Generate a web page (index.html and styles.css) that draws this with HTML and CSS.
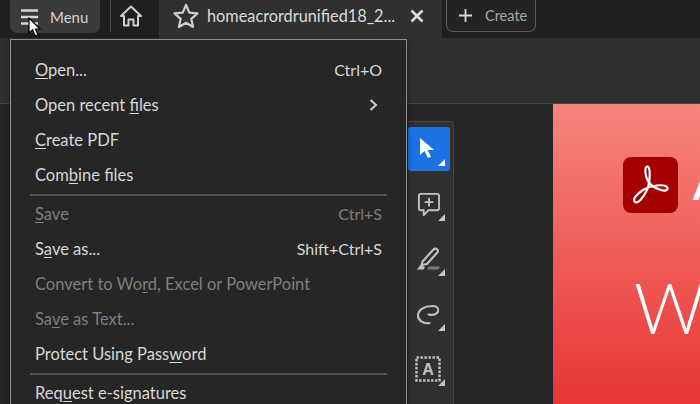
FILE: index.html
```html
<!DOCTYPE html>
<html lang="en">
<head>
<meta charset="UTF-8">
<meta name="viewport" content="width=device-width, initial-scale=1.0">
<title>Acrobat menu</title>
<link rel="stylesheet" href="styles.css">
</head>
<body>
<div class="app">
    <header class="topbar">
        <button class="menu-button">
            <svg class="burger" width="18" height="18" viewBox="0 0 18 18"><path d="M0 2.5h17M0 9h17M0 15.5h17" stroke="#d6d6d6" stroke-width="2.4" fill="none"/></svg>
            <span>Menu</span>
        </button>
        <div class="bar-divider"></div>
        <svg class="home-icon" width="24" height="24" viewBox="0 0 24 24" fill="none" stroke="#cfcfcf" stroke-width="2" stroke-linejoin="round"><path d="M2 12 12 2.5 22 12h-3v9.500h-4.500v-6h-5v6H5V12z"/></svg>
        <div class="tab">
            <svg width="26" height="26" viewBox="0 0 26 26" fill="none" stroke="#cfcfcf" stroke-width="2.2" stroke-linejoin="round"><path d="m13 2 3.300 7.600 8.200.8-6.200 5.500 1.800 8.100-7.100-4.200-7.100 4.200 1.800-8.100-6.200-5.500 8.200-.8z"/></svg>
            <span class="tab-title">homeacrordrunified18_2...</span>
            <svg class="tab-close" width="14" height="14" viewBox="0 0 14 14"><path d="M1.500 1.500l11 11M12.500 1.500l-11 11" stroke="#dcdcdc" stroke-width="2.600" fill="none"/></svg>
        </div>
        <button class="create-button">
            <svg width="13" height="13" viewBox="0 0 13 13"><path d="M6.500 0v13M0 6.500h13" stroke="#d8d8d8" stroke-width="1.800" fill="none"/></svg>
            <span>Create</span>
        </button>
    </header>
    <div class="toolbar"></div>
    <main class="workspace">
        <nav class="tool-rail">
            <div class="tool active">
                <svg width="20" height="24" viewBox="0 0 20 24"><path d="M2 1v17l4.500-4 3.500 7 3-1.500-3.500-6.500H16z" fill="#fff"/></svg>
            </div>
            <div class="tool">
                <svg width="23" height="24" viewBox="0 0 24 25" fill="none" stroke="#c4c4c4" stroke-width="1.900" stroke-linejoin="round"><path d="M4 2h17a2 2 0 0 1 2 2v13a2 2 0 0 1-2 2H12l-5 5v-5H4a2 2 0 0 1-2-2V4a2 2 0 0 1 2-2z"/><path d="M12.500 6v9M8 10.500h9"/></svg>
            </div>
            <div class="tool">
                <svg width="25" height="24" viewBox="0 0 25 24" fill="none"><path d="M6.500 14.500 17.500 2.500a2.400 2.400 0 0 1 3.800 3L11 17l-5.500 1z" stroke="#c4c4c4" stroke-width="2.100" stroke-linejoin="round"/><path d="M1 22.500 4.500 18l4.500 2-1.500 2.500z" fill="#c4c4c4"/><path d="M11 22.500l2-3h11l-1.500 3z" fill="#7a7a7a"/></svg>
            </div>
            <div class="tool">
                <svg width="25" height="21" viewBox="0 0 26 22" fill="none"><path d="M14 20C7 21 2 17 2 12 2 6 9 2 17 2c5 0 7 3 6 6-1 3-6 4-10 3" stroke="#c4c4c4" stroke-width="2.100" stroke-linecap="round"/></svg>
            </div>
            <div class="tool">
                <svg width="26" height="26" viewBox="0 0 26 26" fill="none"><rect x="1.500" y="1.500" width="23" height="23" stroke="#c4c4c4" stroke-width="2.400" stroke-dasharray="2.400 1.600"/><text x="13" y="19" text-anchor="middle" class="rail-letter">A</text></svg>
            </div>
        </nav>
        <section class="page">
            <div class="brand">
                <div class="logo">
                    <svg width="55" height="56" viewBox="0 0 55 56" fill="none"><path d="M24.500 9.500C21.500 9.500 22 17 24 22c2 5 7 9 14 11 5 2 8-1 6-3-3-3-16-2-24 3-6 4-11 9-8 12 3 2 8-4 12-12 3-7 4-23.500.5-23.500z" stroke="#fff" stroke-width="2.200" stroke-linejoin="round"/></svg>
                </div>
                <span class="brand-name">A</span>
            </div>
            <div class="welcome">We</div>
        </section>
    </main>

    <!-- cursor and dropdown lie over the window -->
    <svg class="cursor" width="14" height="21" viewBox="0 0 14 21"><path d="M1 1v15l3.600-3.200 2.600 6.200 2.800-1.200-2.600-5.800H12z" fill="#fff" stroke="#000" stroke-width="1.200"/></svg>
    <div class="dropdown">
        <div class="item"><span><u>O</u>pen...</span><span class="shortcut">Ctrl+O</span></div>
        <div class="item"><span>Open recent <u>f</u>iles</span>
            <svg class="chevron" width="9" height="12" viewBox="0 0 9 12"><path d="M1.500 1 7 6l-5.500 5" stroke="#c8c8c8" stroke-width="2.200" fill="none"/></svg>
        </div>
        <div class="item"><span><u>C</u>reate PDF</span></div>
        <div class="item"><span>Com<u>b</u>ine files</span></div>
        <div class="sep"></div>
        <div class="item disabled"><span><u>S</u>ave</span><span class="shortcut">Ctrl+S</span></div>
        <div class="item"><span>S<u>a</u>ve as...</span><span class="shortcut">Shift+Ctrl+S</span></div>
        <div class="item disabled"><span>Convert to Wo<u>r</u>d, Excel or PowerPoint</span></div>
        <div class="item disabled"><span>Sa<u>v</u>e as Text...</span></div>
        <div class="item"><span>Protect Using Pass<u>w</u>ord</span></div>
        <div class="sep"></div>
        <div class="item"><span>Req<u>u</u>est e-signatures</span></div>
    </div>
</div>
</body>
</html>
```

FILE: styles.css
```css
html, body {
    margin: 0;
    padding: 0;
}
body {
    font-family: "Lato", "Noto Sans", sans-serif;
    background-color: #262626;
    color: #d8d8d8;
}
button {
    font-family: inherit;
    border: none;
    padding: 0;
}
.app {
    position: relative;
    width: 700px;
    height: 404px;
    overflow: hidden;
    display: flex;
    flex-direction: column;
}

/* top bar */
.topbar {
    height: 38px;
    flex-shrink: 0;
    display: flex;
    align-items: flex-start;
    background-color: #1f1f1f;
    padding-left: 10px;
    box-sizing: border-box;
}
.menu-button {
    width: 90px;
    height: 33px;
    display: flex;
    align-items: center;
    padding-left: 11px;
    box-sizing: border-box;
    background-color: #3b3b3b;
    border-radius: 0 0 7px 7px;
    color: #d2d2d2;
    font-size: 15px;
}
.burger {
    margin-right: 11px;
}
.bar-divider {
    width: 1px;
    height: 32px;
    margin-left: 10px;
    background-color: #4a4a4a;
}
.home-icon {
    margin: 4px 16px 0 8px;
}
.tab {
    width: 283px;
    height: 38px;
    display: flex;
    align-items: flex-start;
    padding: 3px 0 0 14px;
    box-sizing: border-box;
    background-color: #303030;
}
.tab-title {
    margin-left: 8px;
    width: 204px;
    font-size: 16.300px;
    line-height: 26px;
    color: #dcdcdc;
    white-space: nowrap;
}
.tab-close {
    margin: 6px 0 0 -1px;
}
.create-button {
    width: 90px;
    height: 32px;
    margin-left: 4px;
    display: flex;
    align-items: center;
    padding-left: 12px;
    box-sizing: border-box;
    background-color: #232323;
    border: 1px solid #5a5a5a;
    border-top: none;
    border-radius: 0 0 7px 7px;
    color: #a8a8a8;
    font-size: 14.500px;
}
.create-button span {
    margin-left: 13px;
}
.toolbar {
    height: 65px;
    flex-shrink: 0;
    background-color: #303030;
    border-bottom: 1px solid #444;
    box-sizing: content-box;
}

/* workspace */
.workspace {
    flex: 1;
    display: flex;
    align-items: flex-start;
    padding-left: 408px;
    background-color: #262626;
}
.tool-rail {
    width: 45px;
    margin-top: 17px;
    padding-top: 5px;
    padding-bottom: 20px;
    display: flex;
    flex-direction: column;
    gap: 11px;
    background-color: #303030;
    border: 1px solid #454545;
    border-left: none;
    border-radius: 0 4px 0 0;
    flex-shrink: 0;
}
.tool {
    position: relative;
    width: 42px;
    height: 44px;
    display: flex;
    align-items: center;
    justify-content: center;
    padding-right: 2px;
    box-sizing: border-box;
    border-radius: 3px;
}
.tool::after {
    content: '';
    position: absolute;
    right: 5px;
    bottom: 5px;
    border-style: solid;
    border-width: 0 0 7px 7px;
    border-color: transparent transparent #c4c4c4 transparent;
}
.tool.active {
    background-color: #1b73e2;
}
.tool.active::after {
    border-bottom-color: #fff;
}
.rail-letter {
    font-family: "Liberation Sans", sans-serif;
    font-size: 16px;
    font-weight: 700;
    fill: #c4c4c4;
}
.page {
    margin-left: 99px;
    width: 147px;
    height: 300px;
    flex-shrink: 0;
    padding: 53px 0 0 70px;
    box-sizing: border-box;
    background: linear-gradient(180deg, #f6857b 0%, #e83536 100%);
    overflow: hidden;
}
.brand {
    display: flex;
    align-items: center;
    white-space: nowrap;
}
.logo {
    width: 55px;
    height: 56px;
    flex-shrink: 0;
    background-color: #a40000;
    border-radius: 8px;
}
.brand-name {
    margin-left: 15px;
    color: #fff;
    font-size: 40px;
    font-weight: 700;
}
.welcome {
    margin: 54px 0 0 11px;
    color: #fff;
    font-family: "Lato", sans-serif;
    font-weight: 300;
    font-size: 70px;
    line-height: 80px;
    white-space: nowrap;
}

/* cursor */
.cursor {
    position: absolute;
    left: 28px;
    top: 17px;
}

/* dropdown */
.dropdown {
    position: absolute;
    left: 10px;
    top: 39px;
    width: 397px;
    padding: 13px 19px 20px 24px;
    box-sizing: border-box;
    background-color: #262626;
    border: 1px solid #8c8c8c;
    box-shadow: 0 2px 6px rgba(0, 0, 0, 0.4);
}
.item {
    height: 35px;
    padding: 0 5px 2px 0;
    box-sizing: border-box;
    display: flex;
    align-items: center;
    justify-content: space-between;
    font-size: 16.500px;
    color: #d8d8d8;
    white-space: nowrap;
}
.item u {
    text-underline-offset: 2px;
}
.item.disabled {
    color: #7f7f7f;
}
.shortcut {
    font-size: 16px;
}
.chevron {
    margin-right: 4px;
}
.sep {
    height: 2px;
    margin: 1px 0 1px -5px;
    background-color: #525252;
}
```
